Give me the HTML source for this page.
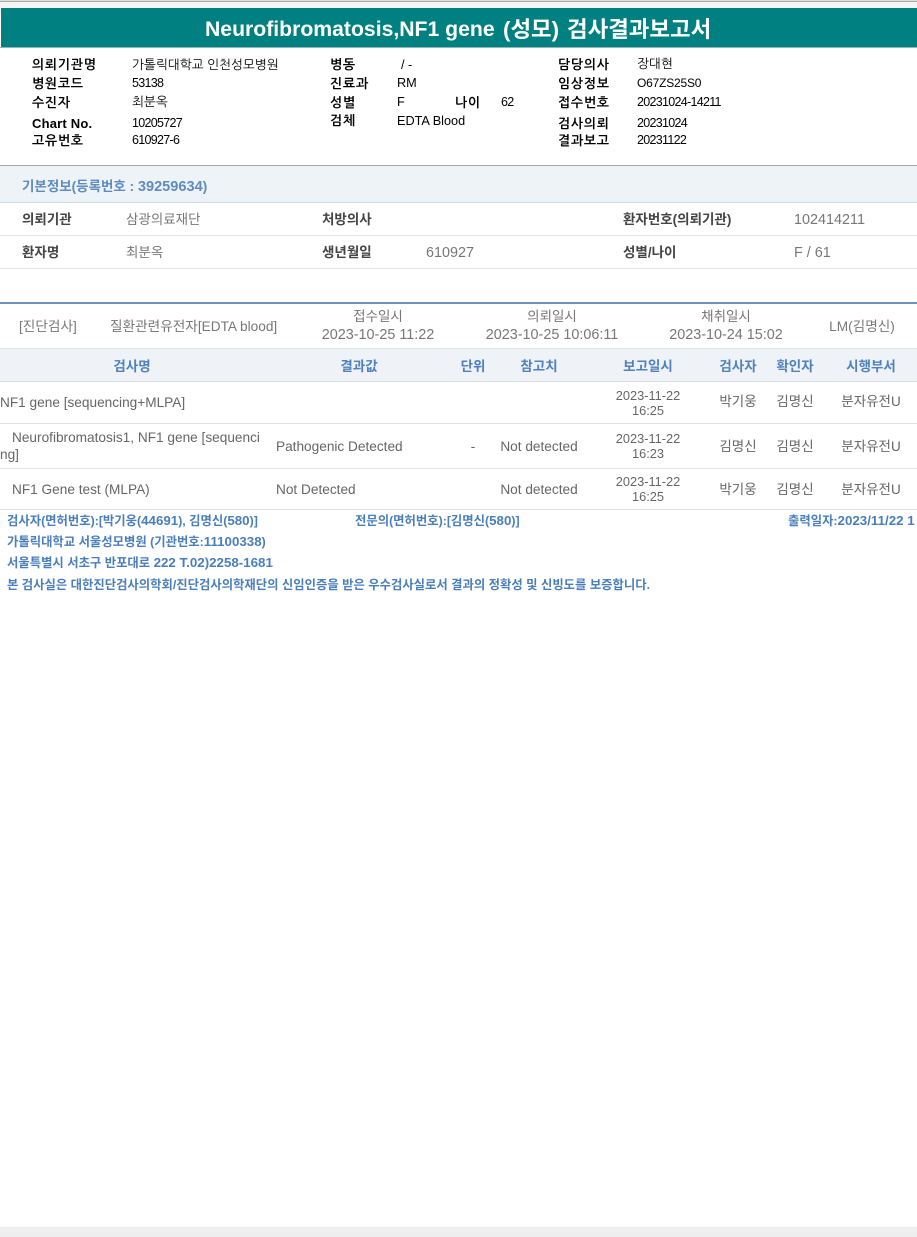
<!DOCTYPE html>
<html lang="ko">
<head>
<meta charset="utf-8">
<title>검사결과보고서</title>
<style>
html,body{margin:0;padding:0;background:#fff;}
body{width:917px;height:1237px;position:relative;overflow:hidden;font-family:"Liberation Sans","Noto Sans CJK KR",sans-serif;}
.r{position:absolute;left:0;width:917px;}
.t{position:absolute;white-space:nowrap;line-height:20px;font-size:13.5px;color:#666;}
.c{transform:translateX(-50%);}
i{font-style:normal;font-size:1.08em;}
.h{font-family:"Liberation Sans","NanumGothic",sans-serif;font-size:12.7px;color:#000;}
.h i{font-size:12.5px;letter-spacing:-.7px;}
.hb{font-family:"Liberation Sans","NanumGothic",sans-serif;font-size:13px;font-weight:bold;color:#000;letter-spacing:.7px;}
.lb{font-size:13.5px;font-weight:bold;color:#444;}
.v{font-size:13.5px;color:#777;}
.t.x{font-size:13.65px;}
.t.n{font-size:14.4px;}
.th{font-size:13.5px;font-weight:bold;color:#4f81bd;}
.d{font-size:12.8px;color:#666;line-height:15px;text-align:center;}
.f{font-size:12.35px;font-weight:bold;color:#4a7ebb;}
.tt{font-weight:bold;color:#fff;font-size:22.4px;top:20px;}
</style>
</head>
<body>
<div class="r" style="top:0;height:1px;background:#ddd"></div>
<div class="r" style="top:1px;height:1px;background:#aaa"></div>
<div class="r" style="top:2px;height:6px;background:#f4f4f4"></div>
<div class="r" style="top:8px;left:1px;width:916px;height:39px;background:#008080"></div>
<div class="r" style="top:47px;height:1px;background:#8fb5b5"></div>
<div class="t tt" style="left:205px;font-size:21.2px">Neurofibromatosis,NF1 gene</div>
<div class="t tt" style="left:503px">(성모)</div>
<div class="t tt" style="left:567px">검사결과보고서</div>

<div class="t hb" style="left:32px;top:55px">의뢰기관명</div><div class="t h" style="left:132px;top:55px">가톨릭대학교 인천성모병원</div>
<div class="t hb" style="left:32px;top:74px">병원코드</div><div class="t h" style="left:132px;top:73px"><i>53138</i></div>
<div class="t hb" style="left:32px;top:93px">수진자</div><div class="t h" style="left:132px;top:92px">최분옥</div>
<div class="t hb" style="left:32px;top:114px;letter-spacing:.2px">Chart No.</div><div class="t h" style="left:132px;top:113px"><i>10205727</i></div>
<div class="t hb" style="left:32px;top:131px">고유번호</div><div class="t h" style="left:132px;top:130px"><i>610927-6</i></div>

<div class="t hb" style="left:330px;top:55px">병동</div><div class="t h" style="left:401px;top:55px">/ -</div>
<div class="t hb" style="left:330px;top:74px">진료과</div><div class="t h" style="left:397px;top:73px">RM</div>
<div class="t hb" style="left:330px;top:93px">성별</div><div class="t h" style="left:397px;top:92px">F</div>
<div class="t hb" style="left:455px;top:93px">나이</div><div class="t h" style="left:501px;top:92px"><i>62</i></div>
<div class="t hb" style="left:330px;top:111px">검체</div><div class="t h" style="left:397px;top:111px">EDTA Blood</div>

<div class="t hb" style="left:558px;top:55px">담당의사</div><div class="t h" style="left:637px;top:54px">장대현</div>
<div class="t hb" style="left:558px;top:74px">임상정보</div><div class="t h" style="left:637px;top:73px"><i style="font-size:12px;letter-spacing:-.2px">O67ZS25S0</i></div>
<div class="t hb" style="left:558px;top:93px">접수번호</div><div class="t h" style="left:637px;top:92px"><i>20231024-14211</i></div>
<div class="t hb" style="left:558px;top:114px">검사의뢰</div><div class="t h" style="left:637px;top:113px"><i>20231024</i></div>
<div class="t hb" style="left:558px;top:131px">결과보고</div><div class="t h" style="left:637px;top:130px"><i>20231122</i></div>

<div class="r" style="top:165px;height:1px;background:#aaa"></div>
<div class="r" style="top:166px;height:36px;background:#eef3f8"></div>
<div class="r" style="top:202px;height:1px;background:#cfdce8"></div>
<div class="t" style="left:22px;top:177px;font-size:13.5px;font-weight:bold;color:#5f8cc0">기본정보(등록번호 : <i>39259634</i>)</div>

<div class="t lb" style="left:22px;top:210px">의뢰기관</div><div class="t v" style="left:126px;top:210px">삼광의료재단</div>
<div class="t lb" style="left:322px;top:210px">처방의사</div>
<div class="t lb" style="left:623px;top:210px">환자번호(의뢰기관)</div><div class="t v n" style="left:794px;top:210px">102414211</div>
<div class="r" style="top:235px;height:1px;background:#e2e2e2"></div>
<div class="t lb" style="left:22px;top:243px">환자명</div><div class="t v" style="left:126px;top:243px">최분옥</div>
<div class="t lb" style="left:322px;top:243px">생년월일</div><div class="t v n" style="left:426px;top:243px">610927</div>
<div class="t lb" style="left:623px;top:243px">성별/나이</div><div class="t v n" style="left:794px;top:243px">F / 61</div>
<div class="r" style="top:268px;height:1px;background:#e2e2e2"></div>

<div class="r" style="top:302px;height:2px;background:#6b93bf"></div>
<div class="t v x" style="left:19px;top:317px">[진단검사]</div>
<div class="t v x" style="left:110px;top:317px">질환관련유전자[EDTA blood]</div>
<div class="t v c" style="left:378px;top:307px">접수일시</div><div class="t v n c" style="left:378px;top:325px">2023-10-25 11:22</div>
<div class="t v c" style="left:552px;top:307px">의뢰일시</div><div class="t v n c" style="left:552px;top:325px">2023-10-25 10:06:11</div>
<div class="t v c" style="left:726px;top:307px">채취일시</div><div class="t v n c" style="left:726px;top:325px">2023-10-24 15:02</div>
<div class="t v x c" style="left:862px;top:317px">LM(김명신)</div>
<div class="r" style="top:348px;height:1px;background:#e2e2e2"></div>

<div class="r" style="top:349px;height:32px;background:#eff3f8"></div>
<div class="r" style="top:381px;height:1px;background:#d5dfe9"></div>
<div class="t th c" style="left:132px;top:357px">검사명</div>
<div class="t th c" style="left:359px;top:357px">결과값</div>
<div class="t th c" style="left:473px;top:357px">단위</div>
<div class="t th c" style="left:539px;top:357px">참고치</div>
<div class="t th c" style="left:648px;top:357px">보고일시</div>
<div class="t th c" style="left:738px;top:357px">검사자</div>
<div class="t th c" style="left:795px;top:357px">확인자</div>
<div class="t th c" style="left:871px;top:357px">시행부서</div>

<div class="t x" style="left:0;top:393px">NF1 gene [sequencing+MLPA]</div>
<div class="t d c" style="left:648px;top:388px">2023-11-22<br>16:25</div>
<div class="t c" style="left:738px;top:392px">박기웅</div><div class="t c" style="left:795px;top:392px">김명신</div><div class="t c" style="left:871px;top:392px">분자유전U</div>
<div class="r" style="top:423px;height:1px;background:#e2e2e2"></div>

<div class="t x" style="left:12px;top:428px">Neurofibromatosis1, NF1 gene [sequenci</div>
<div class="t x" style="left:0;top:445px">ng]</div>
<div class="t x" style="left:276px;top:437px">Pathogenic Detected</div>
<div class="t c" style="left:473px;top:437px">-</div>
<div class="t x c" style="left:539px;top:437px">Not detected</div>
<div class="t d c" style="left:648px;top:431px">2023-11-22<br>16:23</div>
<div class="t c" style="left:738px;top:437px">김명신</div><div class="t c" style="left:795px;top:437px">김명신</div><div class="t c" style="left:871px;top:437px">분자유전U</div>
<div class="r" style="top:468px;height:1px;background:#e2e2e2"></div>

<div class="t x" style="left:12px;top:480px">NF1 Gene test (MLPA)</div>
<div class="t x" style="left:276px;top:480px">Not Detected</div>
<div class="t x c" style="left:539px;top:480px">Not detected</div>
<div class="t d c" style="left:648px;top:474px">2023-11-22<br>16:25</div>
<div class="t c" style="left:738px;top:480px">박기웅</div><div class="t c" style="left:795px;top:480px">김명신</div><div class="t c" style="left:871px;top:480px">분자유전U</div>
<div class="r" style="top:509px;height:1px;background:#e2e2e2"></div>

<div class="t f" style="left:7px;top:511px">검사자(면허번호):[박기웅(<i>44691</i>), 김명신(<i>580</i>)]</div>
<div class="t f" style="left:355px;top:511px">전문의(면허번호):[김명신(<i>580</i>)]</div>
<div class="t f" style="left:788px;top:511px">출력일자:<i>2023/11/22 1</i></div>
<div class="t f" style="left:7px;top:532px">가톨릭대학교 서울성모병원 (기관번호:<i>11100338</i>)</div>
<div class="t f" style="left:7px;top:553px">서울특별시 서초구 반포대로 <i>222 T.02)2258-1681</i></div>
<div class="t f" style="left:7px;top:575px">본 검사실은 대한진단검사의학회/진단검사의학재단의 신임인증을 받은 우수검사실로서 결과의 정확성 및 신빙도를 보증합니다.</div>

<div class="r" style="top:1227px;height:10px;background:#eee"></div>
</body>
</html>
